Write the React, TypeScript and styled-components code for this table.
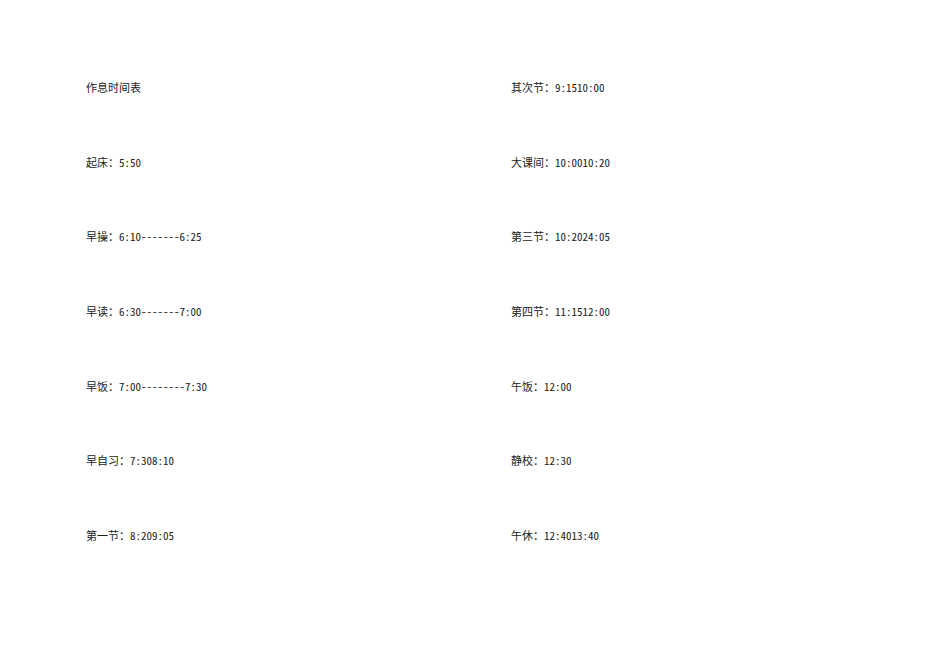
import React from "react";
import styled, { createGlobalStyle } from "styled-components";

const Global = createGlobalStyle`
  html, body {
    margin: 0;
    padding: 0;
    background: #ffffff;
  }
`;

const Page = styled.div`
  width: 950px;
  height: 672px;
  box-sizing: border-box;
  padding: 82px 0 0 86px;
  display: grid;
  grid-template-columns: 425px 1fr;
  grid-auto-flow: column;
  grid-template-rows: repeat(7, 74.67px);
  align-content: start;
`;

const Entry = styled.div`
  font-family: "Noto Sans Mono CJK SC", "Noto Sans CJK SC", monospace;
  font-size: 11px;
  line-height: 11px;
  height: 11px;
  font-weight: 300;
  color: #222;
  white-space: pre;
`;

const left = [
  "作息时间表",
  "起床：5:50",
  "早操：6:10-------6:25",
  "早读：6:30-------7:00",
  "早饭：7:00--------7:30",
  "早自习：7:308:10",
  "第一节：8:209:05",
];

const right = [
  "其次节：9:1510:00",
  "大课间：10:0010:20",
  "第三节：10:2024:05",
  "第四节：11:1512:00",
  "午饭：12:00",
  "静校：12:30",
  "午休：12:4013:40",
];

export default function App() {
  return (
    <>
      <Global />
      <Page>
        {[...left, ...right].map((t, i) => (
          <Entry key={i}>{t}</Entry>
        ))}
      </Page>
    </>
  );
}
